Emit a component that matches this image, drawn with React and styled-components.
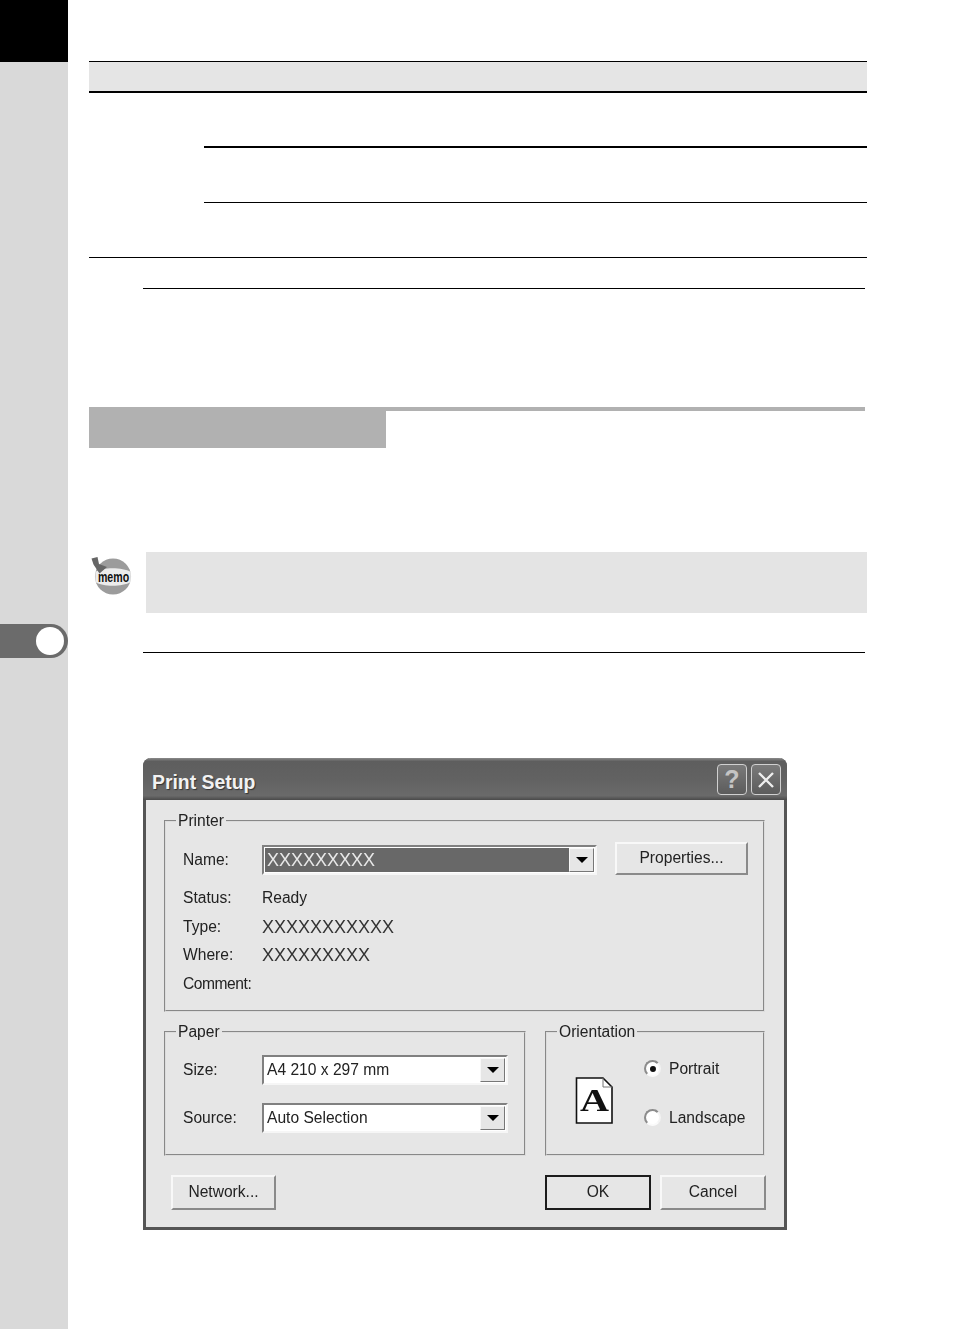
import React from 'react';
import styled, { createGlobalStyle } from 'styled-components';

const Global = createGlobalStyle`
  html, body { margin: 0; padding: 0; background: #fff; }
  body { font-family: "Liberation Sans", Arial, sans-serif; }
`;

const Page = styled.div`
  display: flex;
  width: 954px;
  height: 1329px;
  overflow: hidden;
`;
const Sidebar = styled.aside`
  width: 68px;
  flex: none;
  background: #d9d9d9;
  display: flex;
  flex-direction: column;
`;
const BlackBlock = styled.div`
  height: 62px;
  background: #000;
`;
const ChapterTab = styled.div`
  margin-top: 562px;
  height: 34px;
  background: #6b6b6b;
  border-radius: 0 17px 17px 0;
  display: flex;
  align-items: center;
  justify-content: flex-end;
  padding-right: 4px;
`;
const ChapterDot = styled.div`
  width: 28px;
  height: 28px;
  border-radius: 50%;
  background: #fff;
`;
const Main = styled.main`
  flex: 1;
  padding-top: 61px;
  display: flex;
  flex-direction: column;
  align-items: flex-start;
`;
const Table = styled.div`
  margin-left: 21px;
  width: 778px;
`;
const TableHead = styled.div`
  height: 29px;
  background: #e5e5e5;
  border-top: 1px solid #000;
  border-bottom: 2px solid #000;
`;
const TableBody = styled.div`
  display: grid;
  grid-template-columns: 115px 1fr;
  border-bottom: 1px solid #000;
`;
const TableSide = styled.div``;
const TableRows = styled.div`
  display: flex;
  flex-direction: column;
`;
const TableRow = styled.div`
  height: ${p => p.$h}px;
  box-sizing: border-box;
  border-bottom: ${p => p.$w || 0}px solid #000;
`;
const Rule = styled.hr`
  margin: ${p => p.$top}px 0 0 75px;
  width: 722px;
  border: 0;
  border-top: 1px solid #000;
  height: 0;
`;
const Section = styled.div`
  margin: 118px 0 0 21px;
  width: 776px;
  border-top: 4px solid #b1b1b1;
`;
const SectionTab = styled.div`
  width: 297px;
  height: 37px;
  background: #b1b1b1;
`;
const MemoRow = styled.div`
  margin: 104px 0 0 21px;
  display: flex;
  align-items: flex-start;
`;
const MemoIconWrap = styled.div`
  width: 57px;
  height: 45px;
  margin-top: 4px;
  flex: none;
`;
const MemoBox = styled.div`
  width: 721px;
  height: 61px;
  background: #e4e4e4;
`;
const Dialog = styled.section`
  margin: 105px 0 0 75px;
  width: 644px;
  height: 472px;
  box-sizing: border-box;
  background: #e6e6e6;
  border: 3px solid #555;
  border-top: 0;
  border-radius: 8px 8px 0 0;
  display: flex;
  flex-direction: column;
  filter: blur(0.45px);
  color: #222;
  font-size: 15.6px;
`;
const TitleBar = styled.header`
  height: 42px;
  margin: 0 -3px;
  padding: 5px 6px 0 9px;
  box-sizing: border-box;
  border-radius: 8px 8px 0 0;
  background: linear-gradient(180deg, #8a8a8a 0, #5e5e5e 8%, #626262 50%, #6a6a6a 90%, #4a4a4a 100%);
  display: flex;
  align-items: center;
  justify-content: space-between;
  flex: none;
`;
const TitleText = styled.h1`
  margin: 2px 0 0;
  font-size: 19.4px;
  font-weight: 700;
  color: #f2f2f2;
  text-shadow: 1px 1px 1px #333;
`;
const TitleButtons = styled.div`
  display: flex;
  gap: 4px;
  margin-top: -4px;
`;
const TitleButton = styled.div`
  width: 30px;
  height: 31px;
  box-sizing: border-box;
  border: 1px solid #d0d0d0;
  border-radius: 4px;
  background: linear-gradient(180deg, #7a7a7a, #5c5c5c);
  display: flex;
  align-items: center;
  justify-content: center;
`;
const HelpGlyph = styled.span`
  font-size: 25px;
  font-weight: 700;
  line-height: 1;
  color: #c4c4c4;
`;
const Content = styled.div`
  flex: 1;
  padding: 11px 20px 0 18px;
  display: flex;
  flex-direction: column;
`;
const Group = styled.fieldset`
  margin: 0;
  padding: 0;
  box-sizing: border-box;
  height: ${p => p.$h}px;
  width: ${p => p.$w}px;
  border: 2px groove #dcdcdc;
  min-width: 0;
  flex: none;
`;
const GroupLegend = styled.legend`
  margin-left: 10px;
  padding: 0 2px;
  font-size: 15.6px;
  line-height: 20px;
`;
const PrinterBody = styled.div`
  padding: 11px 16px 0 17px;
  display: flex;
  flex-direction: column;
`;
const NameRow = styled.div`
  display: grid;
  grid-template-columns: 79px 335px 1fr;
  align-items: center;
  height: 34px;
  margin-bottom: 8px;
`;
const InfoRow = styled.div`
  display: grid;
  grid-template-columns: 79px 1fr;
  height: 28.6px;
  align-items: center;
`;
const Label = styled.span`
  white-space: nowrap;
  letter-spacing: ${p => (p.$tight ? '-0.45px' : '0')};
`;
const MaskedValue = styled.span`
  font-size: 18px;
  line-height: 20px;
  white-space: nowrap;
  font-weight: 400;
  color: ${p => (p.$light ? '#e8e8e8' : '#333')};
`;
const Combo = styled.div`
  height: 30px;
  box-sizing: border-box;
  display: flex;
  align-items: stretch;
  background: #fff;
  border: 2px solid;
  border-color: #808080 #f6f6f6 #f6f6f6 #808080;
  padding: 1px;
`;
const ComboValue = styled.div`
  flex: 1;
  padding-left: 2px;
  display: flex;
  align-items: center;
  background: ${p => (p.$selected ? '#686868' : '#fff')};
  color: #222;
  white-space: nowrap;
`;
const ComboArrow = styled.div`
  width: 25px;
  flex: none;
  box-sizing: border-box;
  background: #e6e6e6;
  border: 1px solid;
  border-color: #f8f8f8 #777 #777 #f8f8f8;
  display: flex;
  align-items: center;
  justify-content: center;
  &::after {
    content: "";
    border-left: 6px solid transparent;
    border-right: 6px solid transparent;
    border-top: 6px solid #000;
  }
`;
const Button = styled.button`
  width: ${p => p.$w}px;
  height: ${p => p.$h || 35}px;
  padding: 0 0 2px;
  box-sizing: border-box;
  font: inherit;
  color: #222;
  background: #e6e6e6;
  border: 2px solid;
  border-color: ${p => (p.$primary ? '#1c1c1c' : '#f8f8f8 #8a8a8a #8a8a8a #f8f8f8')};
`;
const PropertiesButton = styled(Button)`
  margin: 0 0 2px 18px;
`;
const GroupsRow = styled.div`
  display: flex;
  margin-top: 10px;
  justify-content: space-between;
  width: 601px;
`;
const PaperBody = styled.div`
  padding: 13px 17px 0 17px;
  display: flex;
  flex-direction: column;
  gap: 18px;
`;
const PaperRow = styled.div`
  display: grid;
  grid-template-columns: 79px 246px;
  align-items: center;
`;
const OrientationBody = styled.div`
  display: flex;
  align-items: center;
  padding: 0 0 0 28px;
  height: 98px;
`;
const PageIcon = styled.svg`
  width: 39px;
  height: 47px;
  flex: none;
  margin-top: 19px;
`;
const RadioList = styled.div`
  margin-left: 30px;
  display: flex;
  flex-direction: column;
  gap: 31px;
  margin-top: 4px;
`;
const RadioRow = styled.div`
  display: flex;
  align-items: center;
  gap: 8px;
  white-space: nowrap;
`;
const Radio = styled.span`
  width: 17px;
  height: 17px;
  flex: none;
  box-sizing: border-box;
  border-radius: 50%;
  background: #fff;
  border: 2px solid;
  border-color: #8c8c8c #f4f4f4 #fafafa #8c8c8c;
  display: flex;
  align-items: center;
  justify-content: center;
  &::after {
    content: "";
    width: 6px;
    height: 6px;
    border-radius: 50%;
    background: ${p => (p.$on ? '#111' : 'transparent')};
  }
`;
const Footer = styled.footer`
  display: flex;
  align-items: center;
  margin-top: 19px;
  padding-left: 7px;
  width: 602px;
  box-sizing: border-box;
`;
const FooterGap = styled.div`
  flex: 1;
`;
const FooterRight = styled.div`
  display: flex;
  gap: 9px;
`;

const MemoIcon = () => (
  <svg width="48" height="40" viewBox="0 0 48 40">
    <circle cx="24" cy="20.5" r="18" fill="#9c9c9c" />
    <path d="M6.4 16 C14 11 33 11 41.8 16 L41.8 26 C33 31 14 31 6.4 26 Z" fill="#ececec" />
    <path d="M2.5 2.5 L8.5 1 L10 8 L18 11 L10.5 17.5 L4.5 8.5 Z" fill="#666" />
    <text transform="translate(24.5 25.5) scale(1 1.35)" fontFamily="Liberation Sans, sans-serif" fontWeight="700" fontSize="10.6" textAnchor="middle" fill="#111">memo</text>
  </svg>
);

const PortraitIcon = () => (
  <PageIcon viewBox="0 0 39 47">
    <path d="M1.5 1 H28 L37 10 V46 H1.5 Z" fill="#fff" stroke="#111" strokeWidth="1.6" />
    <path d="M28 1 V10 H37" fill="none" stroke="#777" strokeWidth="1" />
    <text x="19.5" y="34" textAnchor="middle" fontFamily="Liberation Serif, serif" fontWeight="700" fontSize="32" textLength="29" lengthAdjust="spacingAndGlyphs" fill="#111">A</text>
  </PageIcon>
);

const CloseIcon = () => (
  <svg width="20" height="20" viewBox="0 0 20 20">
    <path d="M3 3 L17 17 M17 3 L3 17" stroke="#eee" strokeWidth="2.4" />
  </svg>
);

export default function App() {
  return (
    <Page>
      <Global />
      <Sidebar>
        <BlackBlock />
        <ChapterTab><ChapterDot /></ChapterTab>
      </Sidebar>
      <Main>
        <Table>
          <TableHead />
          <TableBody>
            <TableSide />
            <TableRows>
              <TableRow $h={55} $w={2} />
              <TableRow $h={55} $w={1} />
              <TableRow $h={54} />
            </TableRows>
          </TableBody>
        </Table>
        <Rule $top={30} />
        <Section><SectionTab /></Section>
        <MemoRow>
          <MemoIconWrap><MemoIcon /></MemoIconWrap>
          <MemoBox />
        </MemoRow>
        <Rule $top={39} />
        <Dialog>
          <TitleBar>
            <TitleText>Print Setup</TitleText>
            <TitleButtons>
              <TitleButton><HelpGlyph>?</HelpGlyph></TitleButton>
              <TitleButton><CloseIcon /></TitleButton>
            </TitleButtons>
          </TitleBar>
          <Content>
            <Group $h={201} $w={601}>
              <GroupLegend>Printer</GroupLegend>
              <PrinterBody>
                <NameRow>
                  <Label>Name:</Label>
                  <Combo>
                    <ComboValue $selected><MaskedValue $light>XXXXXXXXX</MaskedValue></ComboValue>
                    <ComboArrow />
                  </Combo>
                  <PropertiesButton $w={133} $h={33}>Properties...</PropertiesButton>
                </NameRow>
                <InfoRow><Label>Status:</Label><span>Ready</span></InfoRow>
                <InfoRow><Label>Type:</Label><MaskedValue>XXXXXXXXXXX</MaskedValue></InfoRow>
                <InfoRow><Label>Where:</Label><MaskedValue>XXXXXXXXX</MaskedValue></InfoRow>
                <InfoRow><Label $tight>Comment:</Label><span /></InfoRow>
              </PrinterBody>
            </Group>
            <GroupsRow>
              <Group $h={134} $w={362}>
                <GroupLegend>Paper</GroupLegend>
                <PaperBody>
                  <PaperRow>
                    <Label>Size:</Label>
                    <Combo><ComboValue>A4 210 x 297 mm</ComboValue><ComboArrow /></Combo>
                  </PaperRow>
                  <PaperRow>
                    <Label>Source:</Label>
                    <Combo><ComboValue>Auto Selection</ComboValue><ComboArrow /></Combo>
                  </PaperRow>
                </PaperBody>
              </Group>
              <Group $h={134} $w={220}>
                <GroupLegend>Orientation</GroupLegend>
                <OrientationBody>
                  <PortraitIcon />
                  <RadioList>
                    <RadioRow><Radio $on />Portrait</RadioRow>
                    <RadioRow><Radio />Landscape</RadioRow>
                  </RadioList>
                </OrientationBody>
              </Group>
            </GroupsRow>
            <Footer>
              <Button $w={105}>Network...</Button>
              <FooterGap />
              <FooterRight>
                <Button $w={106} $primary>OK</Button>
                <Button $w={106}>Cancel</Button>
              </FooterRight>
            </Footer>
          </Content>
        </Dialog>
      </Main>
    </Page>
  );
}
